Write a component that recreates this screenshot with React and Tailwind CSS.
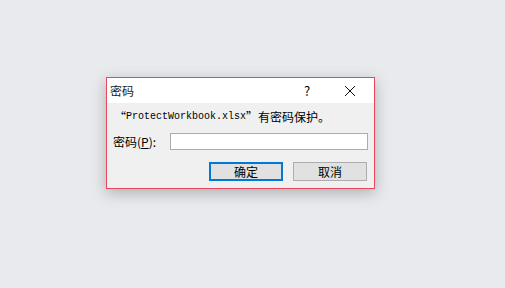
import React from 'react';

const cjk = '"Noto Sans CJK SC", "Noto Sans", sans-serif';

export default function App() {
  return (
    <div className="w-[505px] h-[288px] bg-[#e8eaee] pl-[106px] pt-[77px]" style={{ fontFamily: cjk }}>
      <div className="w-[269px] h-[112px] border border-[#e8475e] bg-[#f0f0f0] shadow-[0_4px_14px_rgba(0,0,0,0.25)] flex flex-col">
        {/* title bar */}
        <div className="h-[25px] bg-white flex items-center pl-[3px] text-[12px] text-black leading-none">
          <span className="text-[#1a1a1a]">密码</span>
          <span className="ml-auto w-[14px] text-center text-[13px] mr-[30px]">?</span>
          <svg width="12" height="12" viewBox="0 0 12 12" className="mr-[18px]">
            <path d="M1 1L11 11M11 1L1 11" stroke="#111" strokeWidth="1" />
          </svg>
        </div>
        {/* message */}
        <div className="mt-[6px] pl-[7px] h-[16px] flex items-center text-[12px] text-black leading-none whitespace-nowrap">
          <span>“</span>
          <span className="text-[10px]" style={{ fontFamily: '"Liberation Mono", monospace' }}>ProtectWorkbook.xlsx</span>
          <span>”有密码保护。</span>
        </div>
        {/* password row */}
        <div className="mt-[8px] pl-[6px] flex items-center h-[17px] text-[12px] leading-none">
          <span className="w-[57px] whitespace-nowrap">密码(<span className="underline">P</span>):</span>
          <div className="w-[198px] h-[17px] bg-white border border-[#acacac]"></div>
        </div>
        {/* buttons */}
        <div className="mt-[12px] flex gap-[10px] pl-[102px]">
          <div className="w-[74px] h-[19px] bg-[#e1e1e1] border-2 border-[#0078d7] flex items-center justify-center text-[12px] leading-none">确定</div>
          <div className="w-[74px] h-[19px] bg-[#e1e1e1] border border-[#adadad] flex items-center justify-center text-[12px] leading-none">取消</div>
        </div>
      </div>
    </div>
  );
}
